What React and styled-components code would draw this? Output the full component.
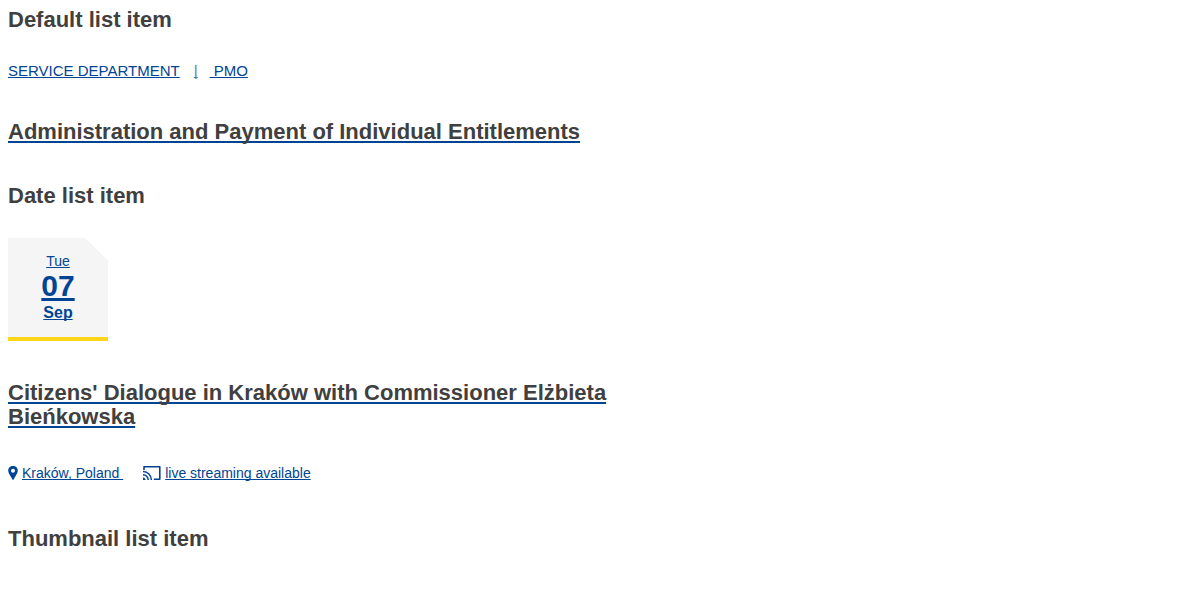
import React from 'react';
import styled, { createGlobalStyle } from 'styled-components';

const GlobalStyle = createGlobalStyle`
  body {
    margin: 0;
    padding: 8px;
    background: #fff;
    color: #404040;
    font-family: "Liberation Sans", Arial, sans-serif;
    font-size: 16px;
    line-height: 24px;
  }
`;

const List = styled.main`
  display: flex;
  flex-direction: column;
`;

const SectionHeading = styled.h2`
  margin: 0;
  font-size: 22px;
  line-height: 24px;
  font-weight: 700;
`;

const Item = styled.a`
  display: flex;
  flex-direction: column;
  align-items: flex-start;
  max-width: 640px;
  padding: 30px 0 40px;
  color: #004494;
  text-decoration: none;
`;

const Meta = styled.div`
  display: flex;
  align-items: center;
  margin-bottom: 40px;
  font-size: 15px;
  line-height: 18px;
  text-transform: uppercase;
  white-space: pre;
`;

const Underlined = styled.span`
  text-decoration: underline;
  text-decoration-skip-ink: none;
`;

const Separator = styled(Underlined)`
  margin: 0 12px 0 14px;
  opacity: 0.7;
`;

const Title = styled.h3`
  margin: 0;
  color: #404040;
  font-size: 22px;
  line-height: 24px;
  font-weight: 700;
  text-decoration: underline;
  text-decoration-color: #004494;
  text-decoration-skip-ink: none;
`;

const DateBlock = styled.time`
  display: flex;
  flex-direction: column;
  align-items: center;
  width: 100px;
  margin-bottom: 40px;
  padding: 14px 0 13px;
  box-sizing: border-box;
  background: linear-gradient(225deg, #fff 16px, #f5f5f5 16px);
  border-bottom: 4px solid #ffd617;
`;

const WeekDay = styled(Underlined)`
  font-size: 14px;
  line-height: 18px;
`;

const Day = styled(Underlined)`
  font-size: 30px;
  line-height: 32px;
  font-weight: 700;
`;

const Month = styled(Underlined)`
  font-size: 16px;
  line-height: 22px;
  font-weight: 700;
`;

const Details = styled.div`
  display: flex;
  gap: 20px;
  margin-top: 30px;
  font-size: 14px;
  line-height: 28px;
`;

const Detail = styled.span`
  display: flex;
  align-items: center;
  gap: 4px;
  white-space: pre;
`;

export default function App() {
  return (
    <>
      <GlobalStyle />
      <List>
        <SectionHeading>Default list item</SectionHeading>
        <Item href="#entitlements">
          <Meta>
            <Underlined>Service department</Underlined>
            <Separator>|</Separator>
            <Underlined> PMO</Underlined>
          </Meta>
          <Title>Administration and Payment of Individual Entitlements</Title>
        </Item>
        <SectionHeading>Date list item</SectionHeading>
        <Item href="#dialogue">
          <DateBlock>
            <WeekDay>Tue</WeekDay>
            <Day>07</Day>
            <Month>Sep</Month>
          </DateBlock>
          <Title>Citizens' Dialogue in Kraków with Commissioner Elżbieta Bieńkowska</Title>
          <Details>
            <Detail>
              <svg width="10" height="14" viewBox="0 0 10 14" aria-hidden="true">
                <path
                  d="M5 0C2.200 0 .2 2.100.2 4.700.2 7.800 3.400 10.800 4.400 13.600q.6.800 1.200 0C6.600 10.800 9.800 7.800 9.800 4.700 9.800 2.100 7.800 0 5 0Zm0 2.800a2 2 0 1 1 0 4 2 2 0 0 1 0-4Z"
                  fill="currentColor"
                  fillRule="evenodd"
                />
              </svg>
              <Underlined>{'Kraków, Poland '}</Underlined>
            </Detail>
            <Detail>
              <svg width="18" height="14" viewBox="0 0 18 14" fill="none" stroke="currentColor" aria-hidden="true">
                <path d="M1 4V.8h15.800v12.400h-6" strokeWidth="1.600" strokeLinejoin="round" />
                <path d="M0 5.600A8.400 8.400 0 0 1 8.400 14M0 8.800A5.200 5.200 0 0 1 5.200 14" strokeWidth="1.500" />
                <path d="M0 11.500A2.500 2.500 0 0 1 2.500 14H0Z" fill="currentColor" stroke="none" />
              </svg>
              <Underlined>live streaming available</Underlined>
            </Detail>
          </Details>
        </Item>
        <SectionHeading>Thumbnail list item</SectionHeading>
      </List>
    </>
  );
}
